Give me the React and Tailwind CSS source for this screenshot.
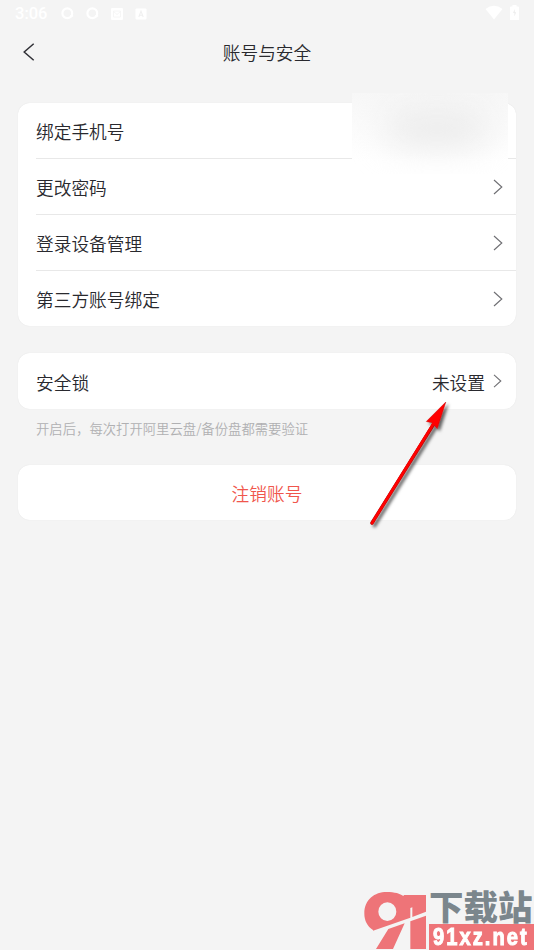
const Chevron = () => (
  <svg className="mb-[1px] h-[16px] w-[10px] shrink-0" viewBox="0 0 10 16" fill="none" stroke="#707074" strokeWidth="1.15">
    <path d="M1 1L8.8 8L1 15" />
  </svg>
)

const SmallChevron = () => (
  <svg className="mb-[2px] h-[14px] w-[9px] shrink-0" viewBox="0 0 9 14" fill="none" stroke="#707074" strokeWidth="1.1">
    <path d="M1 0.8L7.8 7L1 13.2" />
  </svg>
)

const rows = [
  { label: '绑定手机号', arrow: false },
  { label: '更改密码', arrow: true },
  { label: '登录设备管理', arrow: true },
  { label: '第三方账号绑定', arrow: true },
]

const Ring = () => (
  <svg className="w-[13px] h-[13px]" viewBox="0 0 13 13" fill="none" stroke="#fff" strokeWidth="2.2">
    <circle cx="6.3" cy="6.3" r="4.9" />
    <path d="M9.5 9.5l2.5-1.2" />
  </svg>
)

const StatusBar = () => (
  <div className="flex h-[28px] items-center justify-between px-[15px] text-white">
    <div className="flex items-center">
      <span className="w-[46px] font-[Roboto,sans-serif] text-[16.5px] leading-none font-medium">3:06</span>
      <div className="flex items-center gap-[12px] pb-px">
        <Ring />
        <Ring />
        <svg className="w-[12px] h-[12px]" viewBox="0 0 12 12">
          <rect width="12" height="12" rx="1" fill="#fff" />
          <path d="M2.5 3h7v6h-7zM2.5 3.5L6 6.5l3.5-3" fill="none" stroke="#f4f4f4" strokeWidth="0.8" />
        </svg>
        <svg className="w-[12px] h-[12px]" viewBox="0 0 12 12">
          <rect x="0.5" y="0.5" width="11" height="11" rx="1" fill="#fff" />
          <path d="M3.8 9L6 3l2.2 6M4.5 7.2h3" fill="none" stroke="#f0f0f0" strokeWidth="1.1" />
        </svg>
      </div>
    </div>
    <div className="flex items-center gap-[7px] pb-[3px]">
      <svg className="w-[18px] h-[15px]" viewBox="0 0 18 15" fill="#fff">
        <path d="M0.5 4Q9-2.6 17.5 4L9 14.5z" />
      </svg>
      <svg className="w-[9px] h-[15px]" viewBox="0 0 9 15">
        <path d="M2.5 0h4v1.5H8q1 0 1 1V15H0V2.5q0-1 1-1h1.5z" fill="#fff" />
        <path d="M4.8 4L3 8h1.4v3.5L6.2 7.3H4.8z" fill="#ededed" />
      </svg>
    </div>
  </div>
)

// soft patch that hides the phone number
const HiddenNumber = () => (
  <div className="absolute left-[352px] top-[93px] h-[81px] w-[156px] overflow-hidden bg-linear-to-b from-[#f7f7f7] to-white to-85%">
    <div className="absolute left-[34px] top-[16px] h-[38px] w-[102px] rounded-[19px] bg-[#ebebeb] blur-[17px]" />
  </div>
)

const Arrow = () => (
  <svg className="absolute left-[360px] top-[394px] h-[140px] w-[100px]" viewBox="0 0 100 140">
    <defs>
      <filter id="shadow" x="-20%" y="-20%" width="150%" height="150%">
        <feDropShadow dx="2.5" dy="2.5" stdDeviation="1.8" floodColor="#000" floodOpacity="0.6" />
      </filter>
    </defs>
    <g filter="url(#shadow)">
      <path d="M12 129L75 28" stroke="#a01010" strokeWidth="3.4" strokeLinecap="round" />
      <path d="M85.8 8L66.3 27.5L72 28.7L77.2 34.6z" fill="#f00" stroke="#c01010" strokeWidth="0.5" />
      <path d="M12 129L74.5 28" stroke="#f00" strokeWidth="2.8" strokeLinecap="round" />
    </g>
  </svg>
)

const Watermark = () => (
  <div className="absolute bottom-0 right-0 flex h-[60px] w-[170px]">
    <svg className="h-[60px] w-[62px] shrink-0" viewBox="42 30 186 180" fill="#ee7478">
      <path
        fillRule="evenodd"
        d="M69 150C52 139 43 121 43 101C43 58 74 36 110 36C134 36 151 41 160 48L162 45H228V95L187 111V82L181 84V113L69 152zM112 67A27 28 0 1 0 112 123A27 28 0 1 0 112 67z"
      />
      <path d="M78 207L115 147L164 130L129 207zM181 124L228 107V207H181z" />
    </svg>
    <div className="flex-1 pl-[3px]">
      <div className="h-[34px] whitespace-nowrap font-['Noto_Sans_CJK_SC',sans-serif] text-[34.5px] font-black leading-[31px] text-[#7b868c]">
        下载站
      </div>
      <div className="flex h-[26px] items-center bg-[#ee7478] pl-[4px] font-['Liberation_Sans',sans-serif] text-[24px] font-bold leading-none tracking-[2.4px] text-white [-webkit-text-stroke:1px_#fff]">
        <span className="origin-left scale-x-[0.84]">91xz.net</span>
      </div>
    </div>
  </div>
)

export default function App() {
  return (
    <div className="relative h-[950px] w-[534px] overflow-hidden bg-[#f4f4f4] font-['Noto_Sans_CJK_SC',sans-serif] text-[17.7px] font-[350] text-[#29292e]">
      <StatusBar />
      <header className="flex h-[48px] items-center px-[23px]">
        <svg className="h-[18px] w-[12px]" viewBox="0 0 12 18" fill="none" stroke="#303036" strokeWidth="1.5">
          <path d="M10.7 0.8L1.2 9l9.5 8.2" />
        </svg>
        <h1 className="flex-1 pr-[12px] text-center font-[350]">账号与安全</h1>
      </header>

      <main className="px-[18px] pt-[27px]">
        <section className="h-[223px] rounded-[12px] bg-white pl-[18px] shadow-[0_0_1px_#ddd]">
          {rows.map((row) => (
            <div
              key={row.label}
              className="flex h-[56px] items-center justify-between border-b border-[#e8e8e8] pr-[13px] pt-[2px] last:h-[55px] last:border-b-0"
            >
              <span>{row.label}</span>
              {row.arrow && <Chevron />}
            </div>
          ))}
        </section>

        <section className="mt-[27px] flex h-[56px] items-center justify-between rounded-[12px] bg-white pl-[18px] pr-[14px] pt-[2px] shadow-[0_0_1px_#ddd]">
          <span>安全锁</span>
          <div className="flex items-center gap-[8px]">
            <span>未设置</span>
            <SmallChevron />
          </div>
        </section>
        <p className="h-[56px] pl-[18px] pt-[10px] text-[13.35px] leading-[20px] text-[#b0b0b2]">
          开启后，每次打开阿里云盘/备份盘都需要验证
        </p>

        <button className="flex h-[55px] w-full items-center justify-center rounded-[12px] bg-white pt-[2px] text-[#f0564c] shadow-[0_0_1px_#ddd]">
          注销账号
        </button>
      </main>

      <HiddenNumber />
      <Arrow />
      <Watermark />
    </div>
  )
}
